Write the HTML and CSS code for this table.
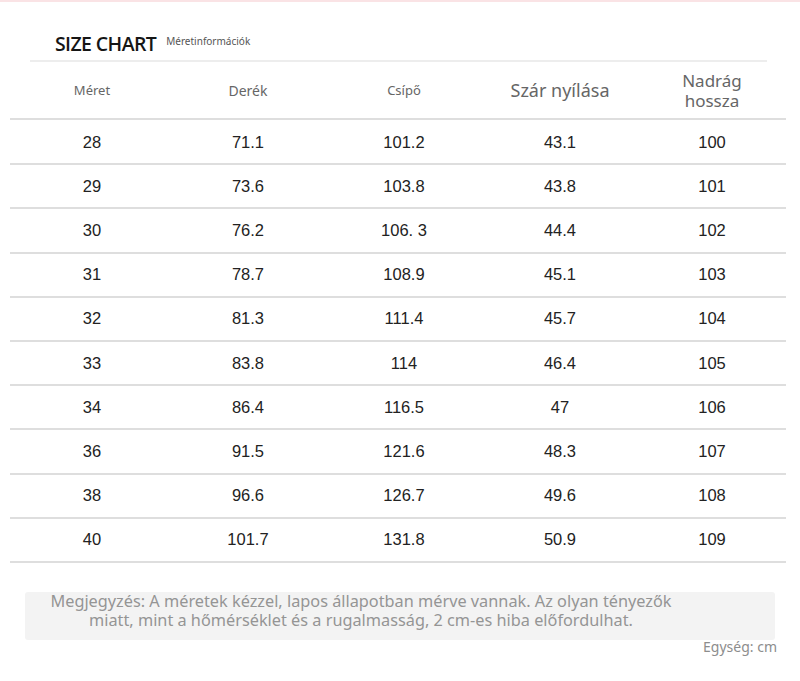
FILE: index.html
```html
<!DOCTYPE html>
<html lang="hu">
<head>
<meta charset="utf-8">
<title>Size chart</title>
<link rel="stylesheet" href="styles.css">
</head>
<body>
<div class="page">
  <div class="title-bar">
    <span class="title">SIZE CHART</span>
    <span class="subtitle">Méretinformációk</span>
  </div>
  <div class="table">
    <div class="row head">
      <div class="c h1">Méret</div>
      <div class="c h2">Derék</div>
      <div class="c h3">Csípő</div>
      <div class="c h4">Szár nyílása</div>
      <div class="c h5">Nadrág<br>hossza</div>
    </div>
    <div class="row"><div class="c">28</div><div class="c">71.1</div><div class="c">101.2</div><div class="c">43.1</div><div class="c">100</div></div>
    <div class="row"><div class="c">29</div><div class="c">73.6</div><div class="c">103.8</div><div class="c">43.8</div><div class="c">101</div></div>
    <div class="row"><div class="c">30</div><div class="c">76.2</div><div class="c">106. 3</div><div class="c">44.4</div><div class="c">102</div></div>
    <div class="row"><div class="c">31</div><div class="c">78.7</div><div class="c">108.9</div><div class="c">45.1</div><div class="c">103</div></div>
    <div class="row"><div class="c">32</div><div class="c">81.3</div><div class="c">111.4</div><div class="c">45.7</div><div class="c">104</div></div>
    <div class="row"><div class="c">33</div><div class="c">83.8</div><div class="c">114</div><div class="c">46.4</div><div class="c">105</div></div>
    <div class="row"><div class="c">34</div><div class="c">86.4</div><div class="c">116.5</div><div class="c">47</div><div class="c">106</div></div>
    <div class="row"><div class="c">36</div><div class="c">91.5</div><div class="c">121.6</div><div class="c">48.3</div><div class="c">107</div></div>
    <div class="row"><div class="c">38</div><div class="c">96.6</div><div class="c">126.7</div><div class="c">49.6</div><div class="c">108</div></div>
    <div class="row"><div class="c">40</div><div class="c">101.7</div><div class="c">131.8</div><div class="c">50.9</div><div class="c">109</div></div>
  </div>
  <div class="note">Megjegyzés: A méretek kézzel, lapos állapotban mérve vannak. Az olyan tényezők<br>miatt, mint a hőmérséklet és a rugalmasság, 2 cm-es hiba előfordulhat.</div>
  <div class="unit">Egység: cm</div>
</div>
</body>
</html>
```
FILE: styles.css
```css
html, body {
  margin: 0;
  padding: 0;
  background: #fff;
}
.page {
  width: 800px;
  height: 681px;
  border-top: 2px solid #fae3e5;
  box-sizing: border-box;
  font-family: "Noto Sans", "Open Sans", sans-serif;
}
.title-bar {
  height: 58px;
  margin: 0 33px 0 30px;
  padding-left: 25px;
  border-bottom: 2px solid #ededed;
  display: flex;
  align-items: flex-end;
}
.title {
  font-family: "Open Sans", sans-serif;
  font-weight: 600;
  font-size: 19.5px;
  letter-spacing: -0.6px;
  color: #151515;
  line-height: 24px;
  margin-bottom: 4px;
}
.subtitle {
  font-size: 10px;
  color: #555;
  margin-left: 10px;
  line-height: 14px;
  margin-bottom: 12px;
}
.table {
  margin-left: 10px;
  width: 776px;
}
.row {
  display: grid;
  grid-template-columns: 160px 156px 156px 156px 148px;
  height: 42.2px;
  border-bottom: 2px solid #dedede;
  align-items: center;
  font-family: "Liberation Sans", Arial, sans-serif;
  font-size: 16.5px;
  color: #222;
}
.row.head {
  height: 56px;
  font-family: "Noto Sans", "Open Sans", sans-serif;
  color: #666;
}
.head + .row {
  margin-top: 1px;
}
.c {
  text-align: center;
}
.row .c:first-child {
  padding-left: 4px;
}
.h1 { font-size: 13px; }
.h2 { font-size: 14px; }
.h3 { font-size: 13px; }
.h4 { font-size: 18px; }
.h5 { font-size: 17px; line-height: 20px; padding-top: 2px; }
.note {
  margin: 29px 25px 0 25px;
  height: 48px;
  background: #f3f3f3;
  border-radius: 3px;
  color: #959595;
  font-size: 16.3px;
  line-height: 19.5px;
  text-align: center;
  padding: 0 78px 0 0;
  box-sizing: border-box;
}
.unit {
  text-align: right;
  margin-right: 23px;
  margin-top: -2px;
  font-size: 14px;
  color: #8d8d8d;
  line-height: 17px;
}
```
